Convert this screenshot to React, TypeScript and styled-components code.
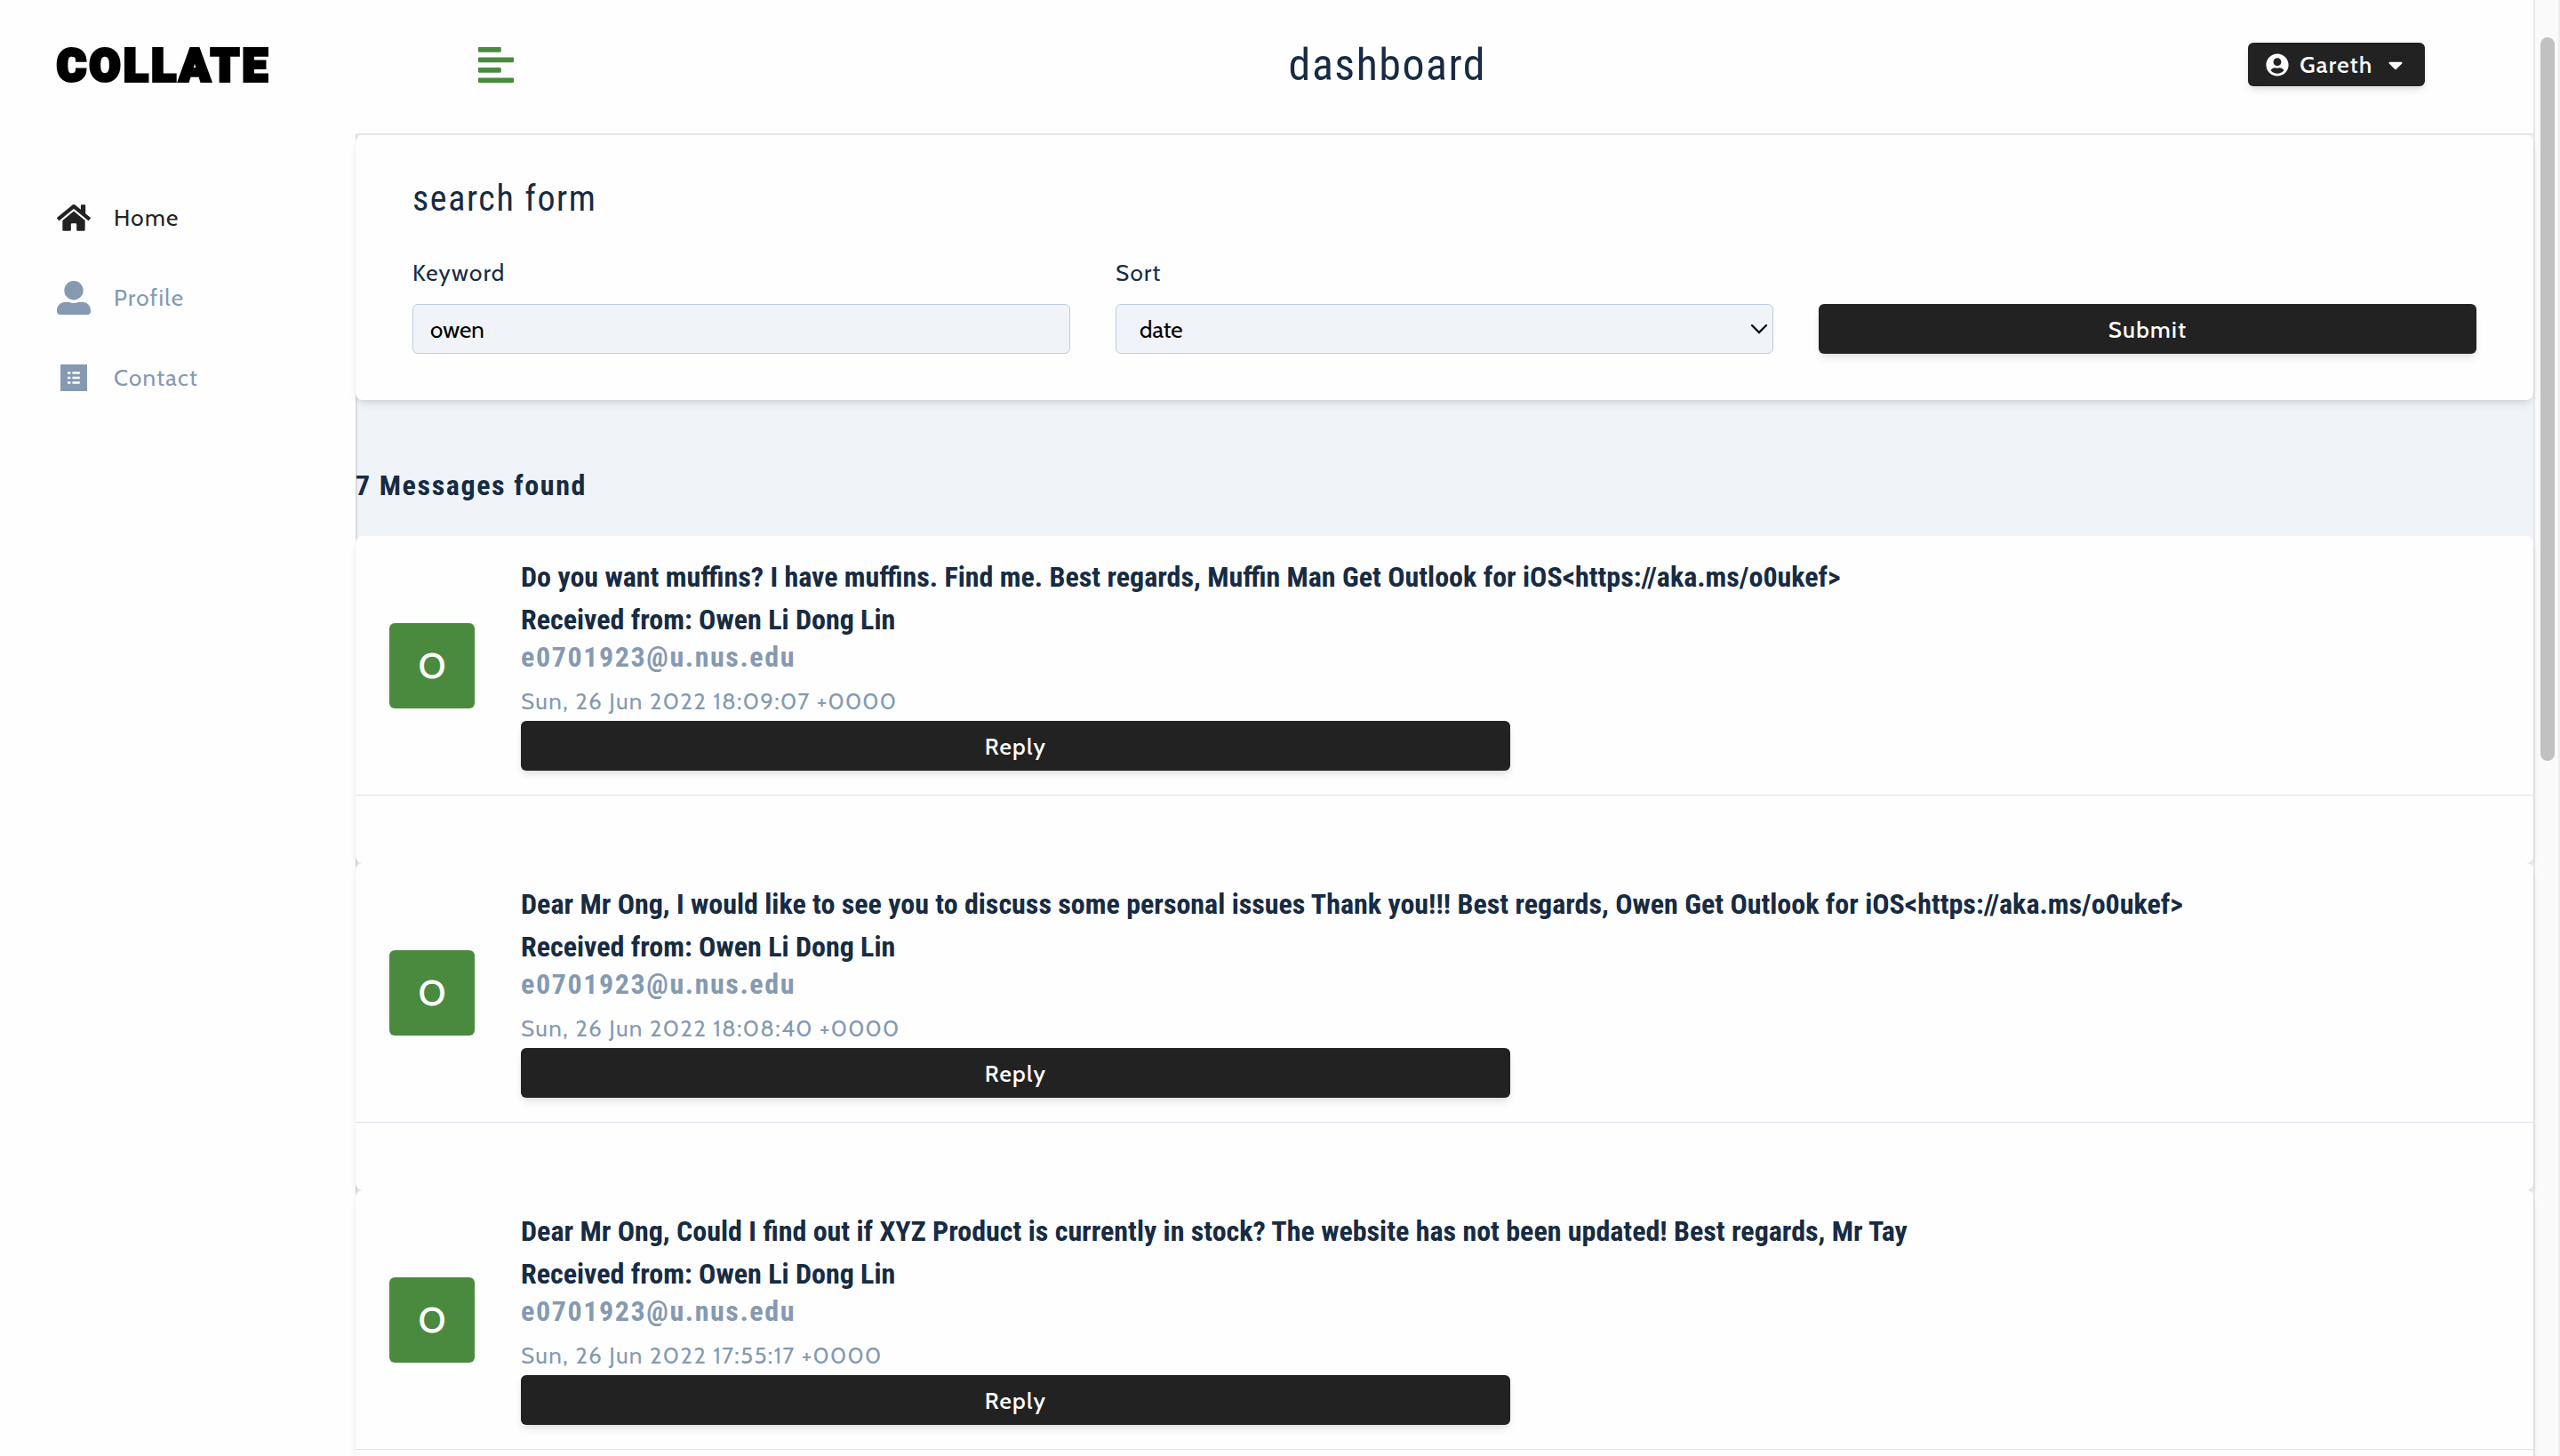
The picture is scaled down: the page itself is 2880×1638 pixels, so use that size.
import React from "react";
import styled, { createGlobalStyle } from "styled-components";
import { FaAlignLeft, FaCaretDown, FaHome, FaUserAlt, FaUserCircle } from "react-icons/fa";

const color = {
  ink: "#172b43",
  muted: "#859ab1",
  page: "#f0f4f9",
  card: "#fefefe",
  field: "#f0f4f9",
  fieldBorder: "#bccce0",
  line: "#dce2ea",
  dark: "#222222",
  green: "#4a8a3f",
};
const heading = `"Roboto Condensed", Roboto, sans-serif`;
const body = `Cabin, Lato, sans-serif`;
const shadow = "0 6px 10px -2px rgba(0, 0, 0, 0.1), 0 3px 6px -2px rgba(0, 0, 0, 0.06)";

const GlobalStyle = createGlobalStyle`
  *, *::before, *::after { box-sizing: border-box; }
  body {
    margin: 0;
    background: ${color.page};
    color: ${color.ink};
    font-family: ${body};
    font-size: 26px;
    line-height: 38px;
    letter-spacing: 0.05em;
  }
  h1, h2, h3, h4, p, ul { margin: 0; padding: 0; }
`;

const Page = styled.div`
  display: grid;
  grid-template-columns: 400px 1fr 30px;
  grid-template-rows: 100vh;
  height: 100vh;
  overflow: hidden;
`;

const Sidebar = styled.aside`
  position: relative;
  padding: 48px 64px;
  background: ${color.card};
  box-shadow: 2px 0 0 0 rgba(0, 0, 0, 0.1);
`;

const Logo = styled.div`
  color: #000;
  font-family: Roboto, sans-serif;
  font-size: 50px;
  font-weight: 900;
  line-height: 52px;
  letter-spacing: 4px;
  white-space: nowrap;
  -webkit-text-stroke: 4px #000;
`;

const NavList = styled.ul`
  margin-top: 100px;
  list-style: none;
`;

const NavLink = styled.a<{ $active?: boolean }>`
  display: flex;
  align-items: center;
  gap: 26px;
  padding: 26px 0;
  color: ${(p) => (p.$active ? color.dark : color.muted)};
  text-decoration: none;

  svg {
    width: 38px;
    height: 38px;
  }
`;

const Content = styled.div`
  min-width: 0;
`;

const Header = styled.header`
  position: relative;
  display: flex;
  align-items: center;
  justify-content: space-between;
  height: 152px;
  padding: 0 5% 5px;
  background: ${color.card};
  border-bottom: 2px solid #e5e6e7;
`;

const ToggleButton = styled.button`
  display: flex;
  padding: 0 12px;
  border: 0;
  background: transparent;
  color: ${color.green};
  font-size: 46px;
`;

const PageTitle = styled.h1`
  font-family: ${heading};
  font-size: 50px;
  font-weight: 400;
  line-height: 58px;
  letter-spacing: 0.03em;
`;

const Button = styled.button`
  display: flex;
  align-items: center;
  justify-content: center;
  gap: 12px;
  height: 56px;
  padding: 2px 20px 0;
  border: 0;
  border-radius: 6px;
  background: ${color.dark};
  box-shadow: ${shadow};
  color: #fff;
  font: inherit;
  font-weight: 500;
  letter-spacing: inherit;
`;

const AccountButton = styled(Button)`
  height: 49px;
  padding: 0 20px;
`;

const Card = styled.section`
  position: relative;
  border-radius: 8px;
  background: ${color.card};
  box-shadow: ${shadow};
`;

const SearchCard = styled(Card)`
  padding: 52px 64px;
`;

const FormTitle = styled.h2`
  font-family: ${heading};
  font-size: 40px;
  font-weight: 400;
  line-height: 40px;
  letter-spacing: 0.04em;
`;

const Fields = styled.form`
  display: grid;
  grid-template-columns: repeat(3, 1fr);
  align-items: end;
  gap: 51px;
  margin-top: 44px;
`;

const Field = styled.div`
  display: grid;
  gap: 16px;
`;

const Input = styled.input`
  width: 100%;
  height: 56px;
  padding: 2px 19px 0;
  border: 1px solid ${color.fieldBorder};
  border-radius: 6px;
  background: ${color.field};
  color: #000;
  font-family: inherit;
  font-size: 26px;
`;

const SelectBox = styled.div`
  position: relative;

  svg {
    position: absolute;
    top: 22px;
    right: 6px;
    pointer-events: none;
  }
`;

const Select = styled.select`
  appearance: none;
  width: 100%;
  height: 56px;
  padding: 2px 26px 0;
  border: 1px solid ${color.fieldBorder};
  border-radius: 6px;
  background: ${color.field};
  color: #000;
  font-family: inherit;
  font-size: 26px;
`;

const Count = styled.h2`
  position: relative;
  margin: 76px 0 37px;
  font-family: ${heading};
  font-size: 32px;
  font-weight: 700;
  line-height: 40px;
  letter-spacing: 0.05em;
`;

const MessageCard = styled(Card)`
  padding-bottom: 76px;
`;

const MessageRow = styled.div`
  display: grid;
  grid-template-columns: auto 1fr;
  align-items: center;
  gap: 52px;
  padding: 0 38px;
  border-bottom: 1px solid ${color.line};
`;

const Avatar = styled.div`
  display: grid;
  place-items: center;
  width: 96px;
  height: 96px;
  border-radius: 6px;
  background: ${color.green};
  color: #fff;
  font-size: 40px;
  font-weight: 500;
  letter-spacing: 0;
`;

const MessageBody = styled.div`
  padding: 22px 0 27px;
`;

const MessageText = styled.h3`
  font-family: ${heading};
  font-size: 32px;
  font-weight: 700;
  line-height: 48px;
  letter-spacing: 0;
`;

const Email = styled.p`
  margin-bottom: 10px;
  color: ${color.muted};
  font-family: ${heading};
  font-size: 32px;
  font-weight: 700;
  line-height: 36px;
  letter-spacing: 0.05em;
`;

const DateLine = styled.p`
  color: ${color.muted};
  line-height: 44px;
`;

const ReplyButton = styled(Button)`
  width: 50%;
`;

const ScrollTrack = styled.div`
  padding: 42px 6px 0;
  border-left: 2px solid #e8e8e8;
  border-right: 2px solid #ededed;
  background: #fafafa;
`;

const ScrollThumb = styled.div`
  width: 16px;
  height: 51%;
  border-radius: 8px;
  background: #c1c1c1;
`;

const ListIcon = () => (
  <svg viewBox="0 0 38 38" aria-hidden="true">
    <rect x="4" y="4" width="30" height="30" fill="currentColor" />
    <g stroke="#fefefe" strokeWidth="2.6">
      <path d="M12 13.5h3.4M12 19h3.4M12 24.5h3.4" />
      <path d="M17.4 13.5h8.4M17.4 19h8.4M17.4 24.5h8.4" />
    </g>
  </svg>
);

const Chevron = () => (
  <svg width="20" height="14" viewBox="0 0 20 14" fill="none" aria-hidden="true">
    <path d="M2 2l8 8 8-8" stroke="#111" strokeWidth="2.4" strokeLinecap="round" />
  </svg>
);

const messages = [
  {
    text: "Do you want muffins? I have muffins. Find me. Best regards, Muffin Man Get Outlook for iOS<https://aka.ms/o0ukef>",
    date: "Sun, 26 Jun 2022 18:09:07 +0000",
  },
  {
    text: "Dear Mr Ong, I would like to see you to discuss some personal issues Thank you!!! Best regards, Owen Get Outlook for iOS<https://aka.ms/o0ukef>",
    date: "Sun, 26 Jun 2022 18:08:40 +0000",
  },
  {
    text: "Dear Mr Ong, Could I find out if XYZ Product is currently in stock? The website has not been updated! Best regards, Mr Tay",
    date: "Sun, 26 Jun 2022 17:55:17 +0000",
  },
];

export default function App() {
  return (
    <>
      <GlobalStyle />
      <Page>
        <Sidebar>
          <Logo>COLLATE</Logo>
          <nav>
            <NavList>
              <li><NavLink href="#home" $active><FaHome />Home</NavLink></li>
              <li><NavLink href="#profile"><FaUserAlt />Profile</NavLink></li>
              <li><NavLink href="#contact"><ListIcon />Contact</NavLink></li>
            </NavList>
          </nav>
        </Sidebar>

        <Content>
          <Header>
            <ToggleButton type="button" aria-label="Toggle sidebar"><FaAlignLeft /></ToggleButton>
            <PageTitle>dashboard</PageTitle>
            <AccountButton type="button"><FaUserCircle />Gareth<FaCaretDown /></AccountButton>
          </Header>

          <main>
            <SearchCard>
              <FormTitle>search form</FormTitle>
              <Fields onSubmit={(e) => e.preventDefault()}>
                <Field>
                  <label htmlFor="keyword">Keyword</label>
                  <Input id="keyword" type="text" defaultValue="owen" />
                </Field>
                <Field>
                  <label htmlFor="sort">Sort</label>
                  <SelectBox>
                    <Select id="sort" defaultValue="date">
                      <option value="date">date</option>
                    </Select>
                    <Chevron />
                  </SelectBox>
                </Field>
                <Button type="submit">Submit</Button>
              </Fields>
            </SearchCard>

            <Count>7 Messages found</Count>

            {messages.map((m) => (
              <MessageCard as="article" key={m.date}>
                <MessageRow>
                  <Avatar>O</Avatar>
                  <MessageBody>
                    <MessageText>{m.text}</MessageText>
                    <MessageText as="h4">Received from: Owen Li Dong Lin</MessageText>
                    <Email>e0701923@u.nus.edu</Email>
                    <DateLine>{m.date}</DateLine>
                    <ReplyButton type="button">Reply</ReplyButton>
                  </MessageBody>
                </MessageRow>
              </MessageCard>
            ))}
          </main>
        </Content>

        <ScrollTrack>
          <ScrollThumb />
        </ScrollTrack>
      </Page>
    </>
  );
}
